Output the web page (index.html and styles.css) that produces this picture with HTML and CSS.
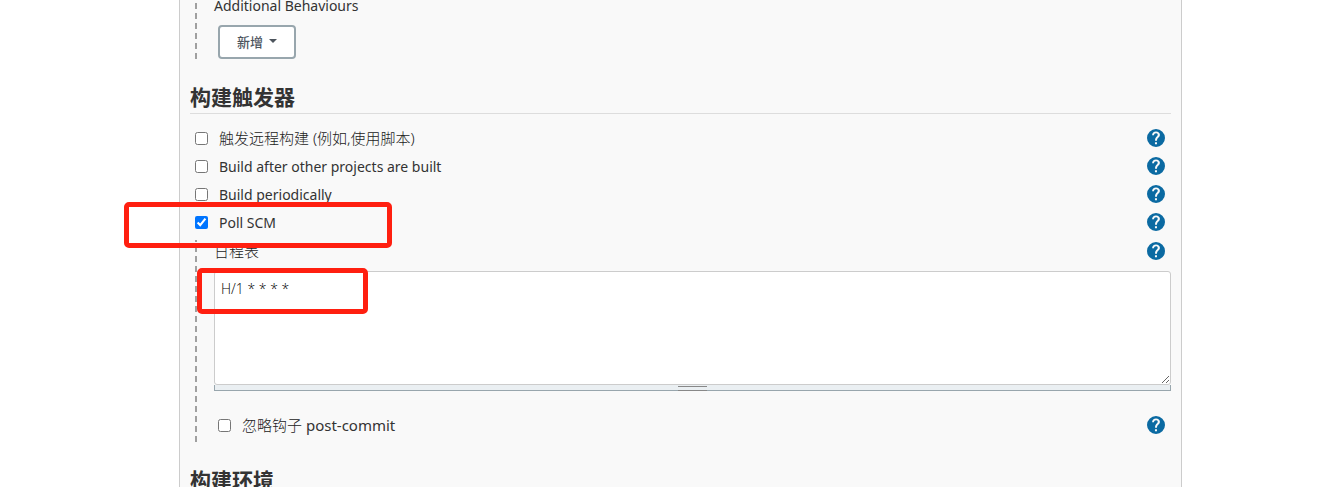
FILE: index.html
```html
<!DOCTYPE html>
<html lang="zh-CN">
<head>
    <meta charset="UTF-8">
    <meta name="viewport" content="width=device-width, initial-scale=1.0">
    <title>构建触发器</title>
    <link rel="stylesheet" href="styles.css">
</head>
<body>
    <svg width="0" height="0" class="symbols" aria-hidden="true">
        <symbol id="help" viewBox="0 0 24 24">
            <path fill="currentColor" d="M12 0a12 12 0 1 0 0 24 12 12 0 0 0 0-24zm1.300 20.300h-2.700v-2.700h2.700zm2.400-9.200c-1.600 1.700-2.400 2.300-2.400 4.700h-2.600c0-3.500 1.200-4.500 2.700-6 1.700-1.600 1.200-4.100-1.400-4.100-1.500 0-2.600 1-2.600 2.500H6.800c0-2.800 2.200-4.900 5.200-4.900s5.200 2 5.200 4.500c0 1.400-.6 2.400-1.500 3.300z"/>
        </symbol>
    </svg>
    <main class="config">
        <div class="nested">
            <div class="top-label">Additional Behaviours</div>
            <button type="button" class="add-btn">新增 <span class="caret"></span></button>
        </div>

        <h2>构建触发器</h2>
        <div class="row">
            <input type="checkbox" id="remote">
            <label for="remote" class="zh">触发远程构建 (例如,使用脚本)</label>
            <a href="#" class="help" aria-label="Help"><svg><use href="#help"/></svg></a>
        </div>
        <div class="row">
            <input type="checkbox" id="after">
            <label for="after">Build after other projects are built</label>
            <a href="#" class="help" aria-label="Help"><svg><use href="#help"/></svg></a>
        </div>
        <div class="row">
            <input type="checkbox" id="periodic">
            <label for="periodic">Build periodically</label>
            <a href="#" class="help" aria-label="Help"><svg><use href="#help"/></svg></a>
        </div>
        <div class="row">
            <input type="checkbox" id="poll" checked>
            <label for="poll">Poll SCM</label>
            <a href="#" class="help" aria-label="Help"><svg><use href="#help"/></svg></a>
        </div>
        <div class="nested schedule">
            <div class="field-head">
                <label for="spec" class="zh">日程表</label>
                <a href="#" class="help" aria-label="Help"><svg><use href="#help"/></svg></a>
            </div>
            <textarea id="spec" spellcheck="false">H/1 * * * *</textarea>
            <div class="grip"></div>
            <div class="row">
                <input type="checkbox" id="hooks">
                <label for="hooks" class="zh">忽略钩子 <span class="latin">post-commit</span></label>
                <a href="#" class="help" aria-label="Help"><svg><use href="#help"/></svg></a>
            </div>
        </div>

        <h2>构建环境</h2>

        <div class="mark mark-poll"></div>
        <div class="mark mark-spec"></div>
    </main>
</body>
</html>
```
FILE: styles.css
```css
* {
    box-sizing: border-box;
}
html {
    height: 100%;
    overflow: hidden;
}
body {
    margin: 0;
    min-height: 100%;
    background-color: #fff;
    color: #333;
    font-family: "Noto Sans", "Noto Sans CJK SC", sans-serif;
    font-size: 14px;
}
.symbols {
    position: absolute;
}
.config {
    position: relative;
    margin: 0 159px 0 179px;
    padding: 0 10px;
    min-height: 100vh;
    background-color: #f9f9f9;
    border: solid #ccc;
    border-width: 0 1px;
}
h2 {
    margin: 24px 0 10px;
    padding-bottom: 2px;
    border-bottom: 1px solid #ddd;
    font-size: 21px;
    line-height: 28px;
}
/* dashed guide on the left of nested blocks */
.nested {
    margin-left: 5px;
    padding-left: 19px;
    background: repeating-linear-gradient(to top, #a0a0a0 0, #a0a0a0 6px, transparent 6px, transparent 10px) left / 2px 100% no-repeat;
}
.top-label {
    line-height: 12px;
    margin-bottom: 13px;
}
.add-btn {
    display: flex;
    align-items: center;
    justify-content: center;
    gap: 6px;
    width: 78px;
    height: 34px;
    margin-left: 4px;
    padding: 0 0 2px;
    background-color: #fff;
    border: 2px solid #98a6ad;
    border-radius: 4px;
    color: #4d545d;
    font-family: inherit;
    font-size: 13px;
    font-weight: 500;
    cursor: pointer;
}
.caret {
    border: 4px solid transparent;
    border-top-color: #4d545d;
    border-bottom: 0;
}
.row {
    display: flex;
    align-items: center;
    height: 28px;
    padding: 0 6px 0 5px;
}
.row input {
    width: 13px;
    height: 13px;
    margin: 0 11px 0 0;
}
.zh {
    font-size: 15px;
    font-weight: 300;
    line-height: 20px;
    color: #222;
}
.latin {
    font-weight: 400;
    color: #333;
}
.help {
    width: 18px;
    height: 18px;
    margin-left: auto;
    color: #0b6aa2;
}
.help svg {
    display: block;
    width: 18px;
    height: 18px;
}
.schedule {
    margin-top: 4px;
    padding-bottom: 3px;
}
.schedule .row {
    padding-left: 4px;
}
.field-head {
    display: flex;
    align-items: center;
    height: 22px;
    margin-bottom: 9px;
    padding-right: 6px;
}
textarea {
    display: block;
    width: 100%;
    height: 114px;
    padding: 7px 6px;
    background-color: #fff;
    border: 1px solid #ccc;
    border-radius: 3px;
    color: #000;
    font-family: "Open Sans", sans-serif;
    font-size: 14px;
    font-weight: 300;
    line-height: 20px;
    resize: both;
}
.grip {
    display: flex;
    justify-content: center;
    height: 6px;
    margin-bottom: 20px;
    background-color: #eaeff2;
    border: solid #98a6ad;
    border-width: 0 1px 1px;
}
.grip::before {
    content: "";
    width: 29px;
    height: 3px;
    margin-top: 1px;
    border: solid #888;
    border-width: 1px 0;
}
/* red highlight boxes lie over the form */
.mark {
    position: absolute;
    height: 46px;
    border: 5px solid #ff1f10;
    border-radius: 5px;
    pointer-events: none;
}
.mark-poll {
    top: 202px;
    left: -56px;
    width: 268px;
}
.mark-spec {
    top: 268px;
    left: 17px;
    width: 171px;
}
```
